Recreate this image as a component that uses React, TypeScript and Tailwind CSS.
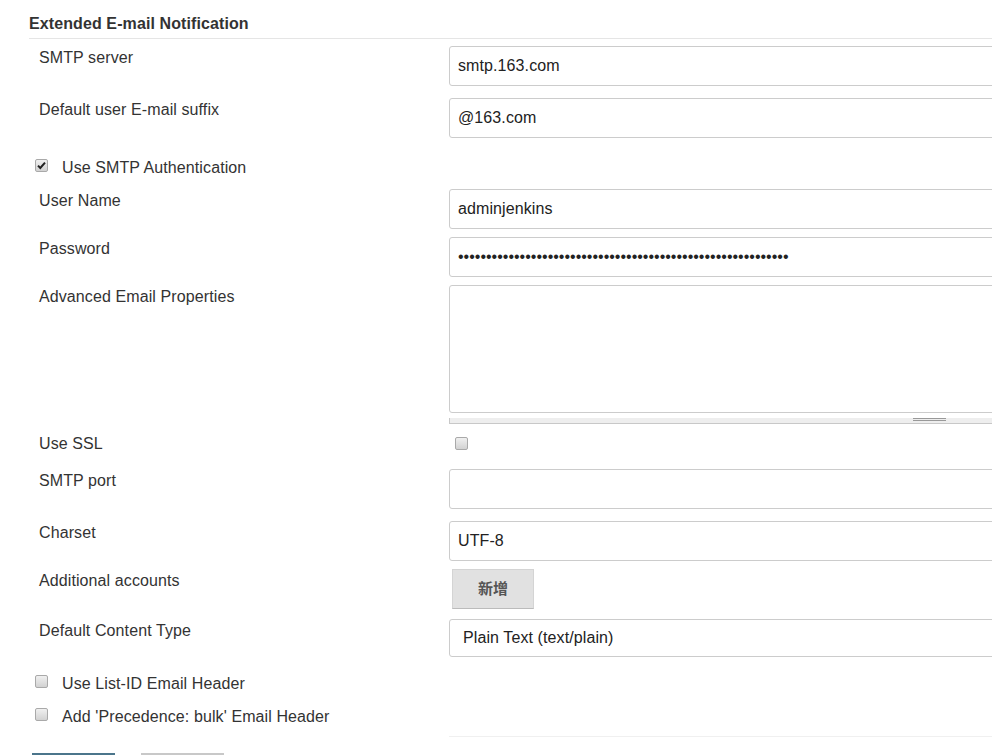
import type { ReactNode } from 'react';

const font = { fontFamily: '"Liberation Sans", Arial, "Noto Sans CJK SC", sans-serif' };

function Check({ checked = false }: { checked?: boolean }) {
  return (
    <span className="relative inline-block h-[13px] w-[13px] rounded-[2px] border border-[#a9a9a9] bg-gradient-to-b from-[#f0f0f0] to-[#d2d2d2]">
      {checked && (
        <svg viewBox="0 0 13 13" className="absolute left-[-1px] top-[-1px] h-[13px] w-[13px]">
          <path d="M3 6.6 L5.3 9 L10 3.6" fill="none" stroke="#222" strokeWidth="2" />
        </svg>
      )}
    </span>
  );
}

function Row({ label, className, children }: { label: string; className: string; children: ReactNode }) {
  return (
    <div className={`flex items-start ${className}`}>
      <div className="w-[420px] shrink-0 pl-[10px] pt-[2px] leading-5">{label}</div>
      <div className="w-[620px] shrink-0">{children}</div>
    </div>
  );
}

function TextBox({ value = '', type = 'text' }: { value?: string; type?: string }) {
  return (
    <input
      readOnly
      type={type}
      value={value}
      className={`block h-10 w-full rounded-[3px] border border-[#cccccc] bg-white px-[8px] text-[16px] text-[#222] outline-none ${type === 'password' ? 'tracking-normal' : 'tracking-[0.1px]'}`}
      style={font}
    />
  );
}

function CheckRow({ label, checked, className }: { label: string; checked?: boolean; className: string }) {
  return (
    <div className={`flex h-5 items-start pl-[6px] ${className}`}>
      <span className="mt-px flex">
        <Check checked={checked} />
      </span>
      <span className="ml-[14px] leading-5">{label}</span>
    </div>
  );
}

export default function App() {
  return (
    <div className="w-full overflow-hidden bg-white pl-[29px] text-[16px] tracking-[0.1px] text-[#333]" style={font}>
      <div className="border-b border-[#e5e5e5] pb-[4px] pt-[14px] font-bold leading-5">Extended E-mail Notification</div>

      <Row label="SMTP server" className="mt-[7px]">
        <TextBox value="smtp.163.com" />
      </Row>
      <Row label="Default user E-mail suffix" className="mt-[12px]">
        <TextBox value="@163.com" />
      </Row>

      <CheckRow label="Use SMTP Authentication" checked className="mt-[20px]" />

      <Row label="User Name" className="mt-[11px]">
        <TextBox value="adminjenkins" />
      </Row>
      <Row label="Password" className="mt-[8px]">
        <TextBox type="password" value={'x'.repeat(59)} />
      </Row>
      <Row label="Advanced Email Properties" className="mt-[8px]">
        <div className="h-[128px] rounded-[3px] border border-[#cccccc] bg-white" />
        <div className="mt-[5px] h-[6px] border-b border-l border-[#c8c8c8] bg-[#eeeeee] pl-[463px]">
          <div className="h-[3px] w-[33px] border-y border-[#999]" />
        </div>
      </Row>

      <Row label="Use SSL" className="mt-[8px]">
        <div className="flex h-[22px] items-start pl-[6px] pt-[5px]">
          <Check />
        </div>
      </Row>

      <Row label="SMTP port" className="mt-[15px]">
        <TextBox />
      </Row>
      <Row label="Charset" className="mt-[12px]">
        <TextBox value="UTF-8" />
      </Row>
      <Row label="Additional accounts" className="mt-[8px]">
        <button
          className="ml-[3px] flex h-10 w-[82px] items-center justify-center border border-[#d4d4d4] border-b-[#bbbbbb] bg-[#e1e1e1] text-[15px] font-bold text-[#555]"
          style={font}
        >
          新增
        </button>
      </Row>
      <Row label="Default Content Type" className="mt-[10px]">
        <div className="flex h-[38px] items-center rounded-[3px] border border-[#cccccc] bg-white pl-[13px] text-[#222]">
          Plain Text (text/plain)
        </div>
      </Row>

      <CheckRow label="Use List-ID Email Header" className="mt-[17px]" />
      <CheckRow label="Add 'Precedence: bulk' Email Header" className="mt-[13px]" />

      <div className="ml-[420px] mt-[9px] border-t border-[#f0f0f0]" />

      <div className="mt-[16px] flex gap-[26px] pl-[3px]">
        <button className="h-[30px] w-[83px] border-t-[3px] border-[#4b758b] bg-[#4b758b]" />
        <button className="h-[30px] w-[83px] border-t-[3px] border-[#c8c8c8] bg-[#f3f3f3]" />
      </div>
    </div>
  );
}
